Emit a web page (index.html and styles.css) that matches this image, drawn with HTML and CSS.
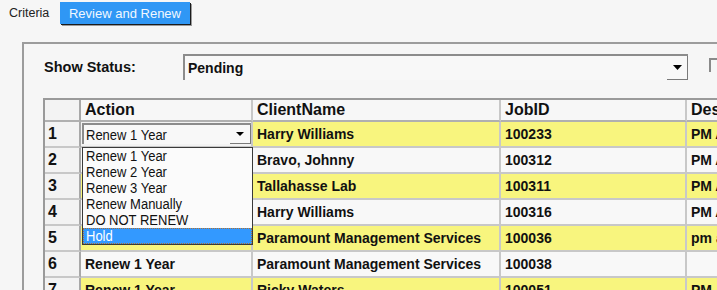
FILE: index.html
```html
<!DOCTYPE html>
<html>
<head>
<meta charset="utf-8">
<link rel="stylesheet" href="styles.css">
</head>
<body>
<div class="topbar">
  <span class="topbar-label">Criteria</span>
  <span class="tab">Review and Renew</span>
</div>
<div class="panel">
  <div class="status-row">
    <span class="status-label">Show Status:</span>
    <div class="combo combo-status">
      <span class="combo-text">Pending</span>
      <span class="combo-btn"><svg width="9" height="5" viewBox="0 0 9 5"><polygon points="0,0 9,0 4.5,5" fill="#000"/></svg></span>
    </div>
    <span class="check"></span>
  </div>
  <div class="grid-wrap">
    <table class="grid">
      <colgroup>
        <col class="c-num"><col class="c-action"><col class="c-client"><col class="c-job"><col class="c-desc">
      </colgroup>
      <thead>
        <tr><th class="num"></th><th>Action</th><th>ClientName</th><th>JobID</th><th>Description</th></tr>
      </thead>
      <tbody>
        <tr class="odd">
          <td class="num">1</td>
          <td class="combo-cell">
            <div class="combo combo-row">
              <span class="combo-text plain"><span class="win-text">Renew 1 Year</span></span>
              <span class="combo-btn"><svg width="8" height="4" viewBox="0 0 8 4"><polygon points="0,0 8,0 4,4" fill="#000"/></svg></span>
            </div>
          </td>
          <td>Harry Williams</td><td>100233</td><td>PM Annual Service</td>
        </tr>
        <tr class="even">
          <td class="num">2</td><td></td><td>Bravo, Johnny</td><td>100312</td><td>PM Annual Service</td>
        </tr>
        <tr class="odd">
          <td class="num">3</td><td></td><td>Tallahasse Lab</td><td>100311</td><td>PM Annual Service</td>
        </tr>
        <tr class="even">
          <td class="num">4</td><td></td><td>Harry Williams</td><td>100316</td><td>PM Annual Service</td>
        </tr>
        <tr class="odd">
          <td class="num">5</td><td></td><td>Paramount Management Services</td><td>100036</td><td>pm annual</td>
        </tr>
        <tr class="even">
          <td class="num">6</td><td>Renew 1 Year</td><td>Paramount Management Services</td><td>100038</td><td></td>
        </tr>
        <tr class="odd">
          <td class="num">7</td><td>Renew 1 Year</td><td>Ricky Waters</td><td>100051</td><td>PM Annual Service</td>
        </tr>
      </tbody>
    </table>
    <ul class="droplist">
      <li><span class="win-text">Renew 1 Year</span></li>
      <li><span class="win-text">Renew 2 Year</span></li>
      <li><span class="win-text">Renew 3 Year</span></li>
      <li><span class="win-text">Renew Manually</span></li>
      <li><span class="win-text">DO NOT RENEW</span></li>
      <li class="sel"><span class="win-text">Hold</span></li>
    </ul>
  </div>
</div>
</body>
</html>
```
FILE: styles.css
```css
* { box-sizing: border-box; }
html, body { margin: 0; padding: 0; }
body {
  width: 717px;
  height: 290px;
  overflow: hidden;
  background: #f6f6f6;
  font-family: "Liberation Sans", Arial, sans-serif;
  color: #111;
}
.topbar {
  display: flex;
  align-items: center;
  height: 26px;
  padding-left: 9px;
}
.topbar-label {
  width: 51px;
  font-size: 12.5px;
  color: #222;
}
.tab {
  display: flex;
  align-items: center;
  justify-content: center;
  width: 130px;
  height: 22px;
  background: #2f97f5;
  color: #f2f8ff;
  font-size: 13px;
  box-shadow: 1px 1px 0 #1b1b1b, 2px 2px 0 #9a9a9a;
}
.panel {
  width: 780px;
  margin: 16px 0 0 22px;
  padding: 10px 0 0 19px;
  border-top: 2px solid #9c9c9c;
  border-left: 2px solid #9c9c9c;
}
.status-row {
  display: flex;
  align-items: center;
  height: 26px;
}
.status-label {
  width: 140px;
  padding-left: 1px;
  font-weight: bold;
  font-size: 14.5px;
}
.combo {
  display: flex;
  align-items: center;
  background: #f8f8f8;
  border-top: 2px solid #8c8c8c;
  border-left: 2px solid #8c8c8c;
}
.combo-status {
  width: 505px;
  height: 26px;
}
.combo-text {
  flex: 1;
  padding-left: 3px;
  font-weight: bold;
  font-size: 14px;
}
.combo-text.plain {
  font-weight: normal;
  font-size: 13px;
  padding-left: 2px;
}
.win-text {
  display: inline-block;
  line-height: 13px;
  transform: scaleY(1.15);
  transform-origin: 50% 55%;
}
.combo-btn {
  align-self: stretch;
  width: 21px;
  display: flex;
  align-items: center;
  justify-content: center;
  border-right: 1px solid #7a7a7a;
  border-bottom: 1px solid #7a7a7a;
}
.check {
  align-self: flex-start;
  width: 14px;
  height: 14px;
  margin: 4px 0 0 21px;
  border-top: 2px solid #8a8a8a;
  border-left: 2px solid #8a8a8a;
}
.grid-wrap {
  position: relative;
  margin-top: 18px;
}
.grid {
  border-collapse: separate;
  border-spacing: 0;
  table-layout: fixed;
  width: 814px;
  border-top: 2px solid #9a9a9a;
  border-left: 2px solid #9a9a9a;
}
.c-num { width: 36px; }
.c-action { width: 172px; }
.c-client { width: 248px; }
.c-job { width: 186px; }
.c-desc { width: 170px; }
.grid th, .grid td {
  padding: 0 0 0 4px;
  border-right: 2px solid #c8c8c8;
  border-bottom: 2px solid #c8c8c8;
  white-space: nowrap;
  overflow: hidden;
  text-align: left;
  vertical-align: middle;
  font-weight: bold;
}
.grid thead tr { height: 22px; }
.grid th {
  font-size: 16px;
  background: #f7f7f7;
  border-bottom-color: #b0b0b0;
}
.grid tbody tr { height: 26px; }
.grid td { font-size: 14px; }
.grid .num {
  padding-left: 3px;
  font-size: 16px;
  background: #f3f3f3;
  border-right-color: #a8a8a8;
}
.grid tr.odd td { background: #f8f57e; }
.grid tr.even td { background: #f8f8f8; }
.grid tr td.num { background: #f3f3f3; }
.grid tr td.combo-cell {
  padding: 1px 0 2px 1px;
  background: #f3f3f3;
}
.combo-row {
  height: 21px;
}
.droplist {
  position: absolute;
  left: 39px;
  top: 49px;
  width: 171px;
  height: 98px;
  margin: 0;
  padding: 0;
  list-style: none;
  background: #fbfbfb;
  border: 1px solid #3a3a3a;
  font-size: 13px;
  color: #111;
}
.droplist li {
  height: 16px;
  line-height: 16px;
  padding-left: 3px;
}
.droplist li.sel {
  background: #3399ff;
  color: #fff;
  outline: 1px dotted #b07030;
  outline-offset: -1px;
}
```
